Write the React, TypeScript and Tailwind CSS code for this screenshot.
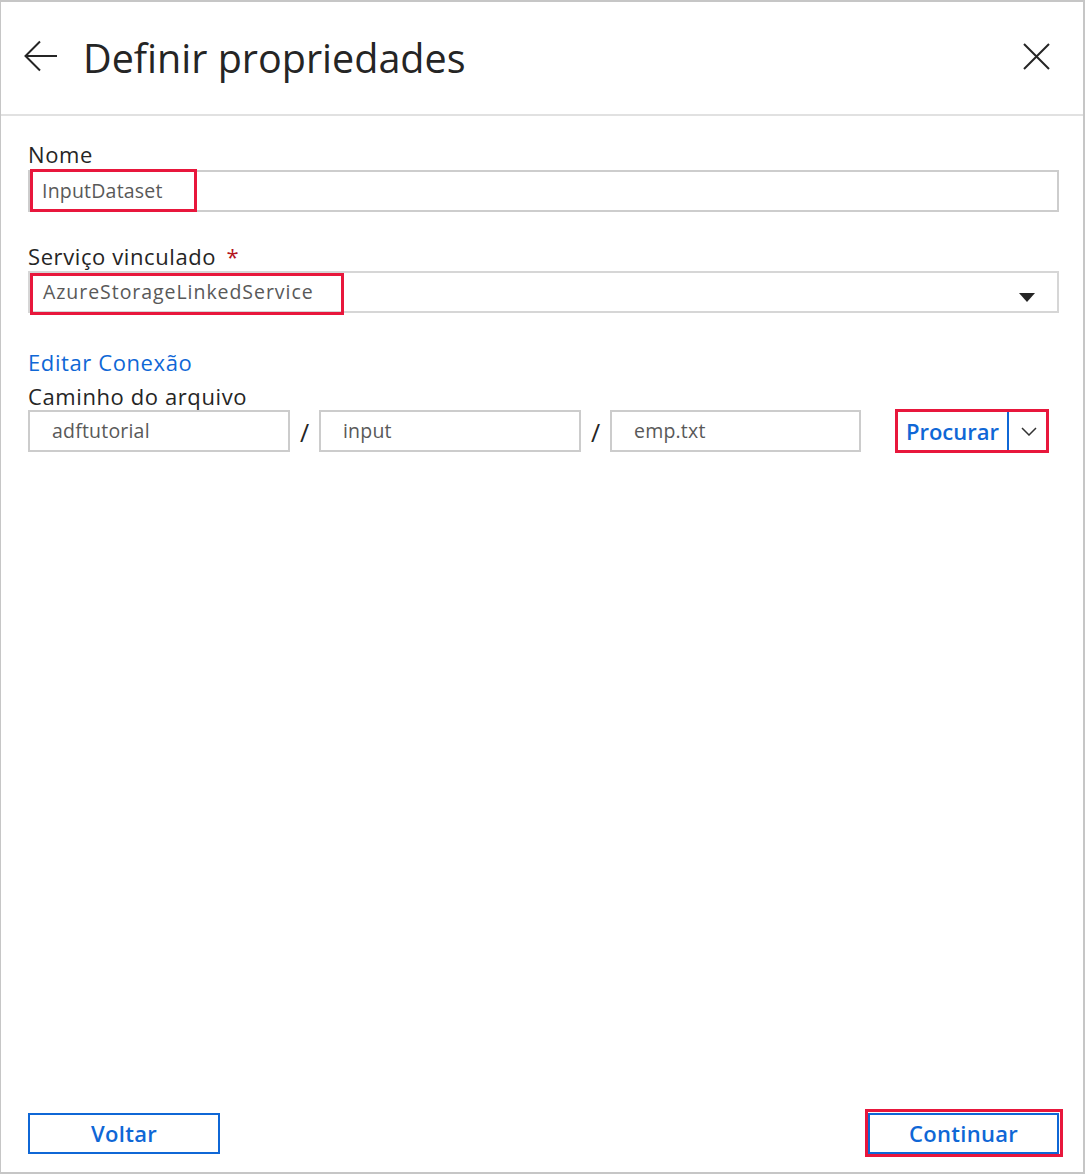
import React from "react";

const font = { fontFamily: '"Open Sans", "Noto Sans", sans-serif' };

function PathBox({ value, w }: { value: string; w: string }) {
  return (
    <div className={`${w} h-[42px] border-2 border-[#cccccc] flex items-center pl-[22px] text-[19.5px] tracking-[0.2px] text-[#595959]`}>
      {value}
    </div>
  );
}

function Slash() {
  return <div className="w-[29px] h-[42px] flex items-center justify-center text-[25px] text-[#252525] pt-[4px]">/</div>;
}

export default function App() {
  return (
    <div
      style={font}
      className="w-[1085px] h-[1174px] bg-white border-[#c6c6c6] border-l border-r-2 border-t-2 border-b-2 flex flex-col text-[#252525]"
    >
      <header className="h-[114px] shrink-0 border-b-2 border-[#e1e1e1] flex items-start pt-[38px] pl-[23px] pr-[33px]">
        <svg width="34" height="32" viewBox="0 0 34 32">
          <path d="M1.5 16 H33 M16 1.5 L1.5 16 L16 30.5" fill="none" stroke="#252525" strokeWidth="2" />
        </svg>
        <h1 className="ml-[25px] text-[39.5px] leading-[40px] mt-[-2px] text-[#252525] font-normal">Definir propriedades</h1>
        <div className="flex-1" />
        <svg width="27" height="27" viewBox="0 0 27 27" className="mt-[3px]">
          <path d="M1 1 L26 26 M26 1 L1 26" fill="none" stroke="#252525" strokeWidth="2" />
        </svg>
      </header>

      <main className="flex-1 flex flex-col pl-[27px] pr-[24px] pt-[24px] pb-[18px]">
        <div className="text-[22px] leading-[28px] tracking-[0.6px]">Nome</div>
        <div className="relative mt-[2px] h-[42px] border-2 border-[#cdcdcd] flex items-center pl-[12px] text-[19.5px] tracking-[0.2px] text-[#595959]">
          InputDataset
          <div className="absolute left-[0px] top-[-3px] w-[167px] h-[43px] border-[3px] border-[#e8173c]" />
        </div>

        <div className="mt-[30px] text-[22px] leading-[28px] tracking-[0.6px]">
          Serviço vinculado <span className="ml-[4px] text-[#b4141e]">*</span>
        </div>
        <div className="relative mt-[1px] h-[42px] border-2 border-[#d6d6d6] flex items-center pl-[13px] text-[19.5px] tracking-[0.95px] text-[#595959]">
          AzureStorageLinkedService
          <svg width="16" height="10" viewBox="0 0 16 10" className="absolute right-[22px] top-[20px]">
            <polygon points="0,0 16,0 8,9" fill="#252525" />
          </svg>
          <div className="absolute left-[0px] top-[0px] w-[314px] h-[42px] border-[3px] border-[#e8173c]" />
        </div>

        <div className="mt-[35px] text-[22px] leading-[28px] tracking-[0.6px] text-[#0f67d6]">Editar Conexão</div>
        <div className="mt-[6px] text-[22px] leading-[28px] tracking-[0.6px]">Caminho do arquivo</div>
        <div className="mt-[-1px] flex items-center">
          <PathBox value="adftutorial" w="w-[262px]" />
          <Slash />
          <PathBox value="input" w="w-[262px]" />
          <Slash />
          <PathBox value="emp.txt" w="w-[251px]" />
          <div className="relative ml-[34px] h-[44px] w-[154px] flex items-stretch">
            <div className="absolute inset-0 border-[3px] border-[#e8173c]" />
            <div className="w-[112px] flex items-center justify-end pr-[8px] text-[22px] font-semibold text-[#0f67d6]">Procurar</div>
            <div className="w-[2px] bg-[#0f67d6] my-[2px]" />
            <div className="flex-1 flex items-center justify-center">
              <svg width="16" height="9" viewBox="0 0 16 9">
                <path d="M1 1 L8 8 L15 1" fill="none" stroke="#333333" strokeWidth="1.5" />
              </svg>
            </div>
          </div>
        </div>

        <div className="mt-auto flex items-end justify-between">
          <button className="w-[192px] h-[41px] border-2 border-[#0f67d6] text-[22px] font-semibold text-[#0f67d6] flex items-center justify-center tracking-[0.3px]">
            Voltar
          </button>
          <div className="relative">
            <button className="w-[191px] h-[41px] border-2 border-[#0f67d6] text-[22px] font-semibold text-[#0f67d6] flex items-center justify-center tracking-[0.3px]">
              Continuar
            </button>
            <div className="absolute left-[-3px] top-[-4px] right-[-4px] bottom-[-3px] border-[3px] border-[#e8173c]" />
          </div>
        </div>
      </main>
    </div>
  );
}
